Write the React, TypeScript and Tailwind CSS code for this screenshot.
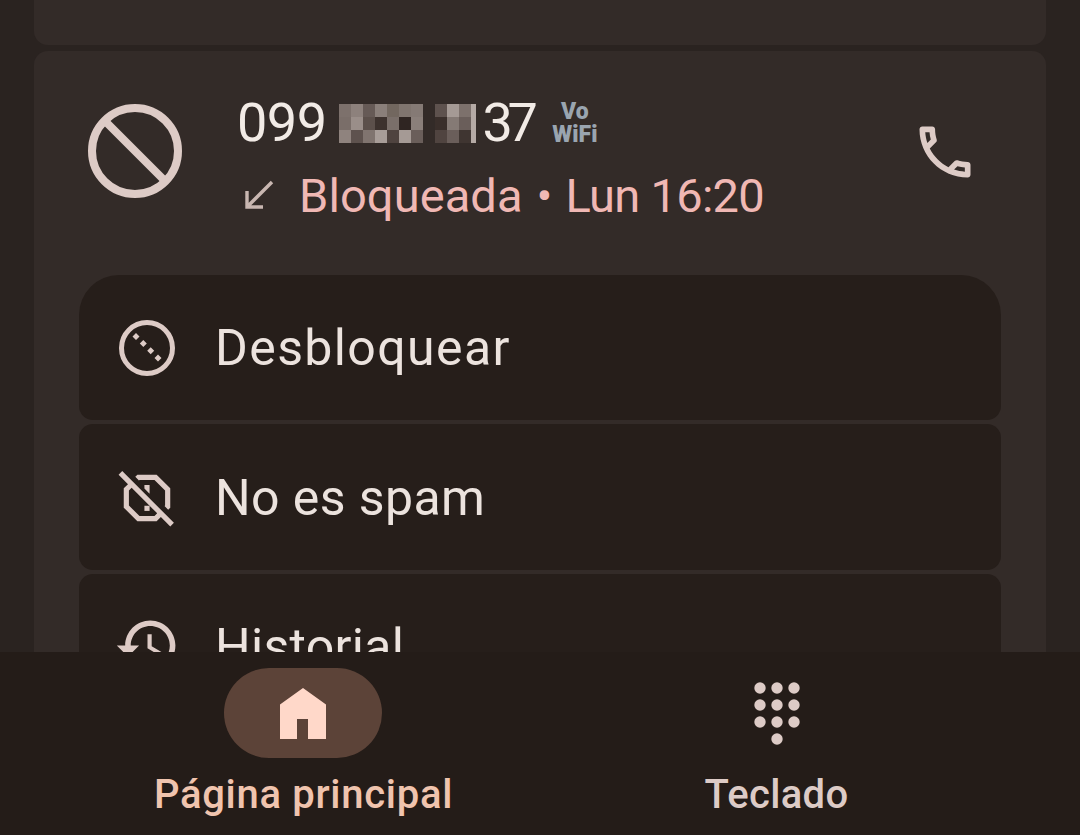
import React from 'react';

const mosaicA = [
  'bg-[#7d716c]', 'bg-[#8d817c]', 'bg-[#665a56]', 'bg-[#8a7f7a]', 'bg-[#72675f]', 'bg-[#80756f]', 'bg-[#857a75]',
  'bg-[#7a6e69]', 'bg-[#9a8e89]', 'bg-[#5c504b]', 'bg-[#3d322e]', 'bg-[#7a6f6a]', 'bg-[#2f2522]', 'bg-[#8a7f7a]',
  'bg-[#8f837e]', 'bg-[#5e524e]', 'bg-[#80746f]', 'bg-[#a89d98]', 'bg-[#4f433f]', 'bg-[#a59a95]', 'bg-[#6a5e5a]',
];

const mosaicB = [
  'bg-[#5e524e]', 'bg-[#a59a95]', 'bg-[#7d716c]',
  'bg-[#3a2f2b]', 'bg-[#857a75]', 'bg-[#6a5e5a]',
  'bg-[#504440]', 'bg-[#6a5e5a]', 'bg-[#3f3531]',
];

const font = "font-['Roboto',sans-serif]";

function BlockIcon() {
  return (
    <svg width="94" height="94" viewBox="0 0 94 94" fill="none" stroke="#ddcbc6" strokeWidth="8">
      <circle cx="47" cy="47" r="43" />
      <path d="M17 17l60 60" />
    </svg>
  );
}

function UnblockIcon() {
  return (
    <svg width="56" height="56" viewBox="0 0 56 56" fill="#ddcbc6">
      <circle cx="28" cy="28" r="25.5" fill="none" stroke="#ddcbc6" strokeWidth="5" />
      <path d="M17 13l3.5 3.5-3.5 3.5-3.5-3.5zM24.3 20l3.5 3.5-3.5 3.5-3.5-3.5zM31.7 27.3l3.5 3.5-3.5 3.5-3.5-3.5zM39 34.6l3.5 3.5-3.5 3.5-3.5-3.5z" />
    </svg>
  );
}

function NotSpamIcon() {
  return (
    <svg width="62" height="62" viewBox="0 0 24 24" fill="#ddcbc6">
      <path d="M9.1 5h5.8L19 9.1v5.8l-.22.22 1.42 1.41.8-.8V8.27L15.73 3H8.27l-.8.8 1.41 1.42zM13 7h-2v1.33l2 2zM2.41 1.58L1 2.99l3.64 3.64L3 8.27v7.46L8.27 21h7.46l1.64-1.64L21.01 23l1.41-1.41L2.41 1.58zM14.9 19H9.1L5 14.9V9.1l1.05-1.05 9.9 9.9L14.9 19z" />
      <path d="M11 15h2v2h-2z" />
    </svg>
  );
}

function HistoryIcon() {
  return (
    <svg width="67" height="67" viewBox="0 0 24 24" fill="#ddcbc6" className="mb-[3px]">
      <path d="M13 3c-4.97 0-9 4.03-9 9H1l3.89 3.89.07.14L9 12H6c0-3.87 3.13-7 7-7s7 3.13 7 7-3.13 7-7 7c-1.93 0-3.68-.79-4.94-2.06l-1.42 1.42C8.27 19.99 10.51 21 13 21c4.97 0 9-4.03 9-9s-4.03-9-9-9zm-1 5v5l4.28 2.54.72-1.21-3.5-2.08V8H12z" />
    </svg>
  );
}

function PhoneIcon() {
  return (
    <svg width="68" height="68" viewBox="0 0 24 24" fill="#ddcbc6">
      <path d="M6.54 5c.06.89.21 1.76.45 2.59l-1.2 1.2c-.41-1.2-.67-2.47-.76-3.79h1.51m9.86 12.02c.85.24 1.72.39 2.6.45v1.49c-1.32-.09-2.59-.35-3.8-.75l1.2-1.19M7.5 3H4c-.55 0-1 .45-1 1 0 9.39 7.61 17 17 17 .55 0 1-.45 1-1v-3.49c0-.55-.45-1-1-1-1.24 0-2.45-.2-3.57-.57-.1-.04-.21-.05-.31-.05-.26 0-.51.1-.71.29l-2.2 2.2c-2.83-1.45-5.15-3.76-6.59-6.59l2.2-2.2c.28-.28.36-.67.25-1.02C8.7 6.45 8.5 5.25 8.5 4c0-.55-.45-1-1-1z" />
    </svg>
  );
}

function BlockedArrow() {
  return (
    <svg width="30" height="30" viewBox="0 0 30 30" fill="none" stroke="#c9b7b1" strokeWidth="3.4">
      <path d="M28 2L3 27M3 11v16h16" />
    </svg>
  );
}

function HomeIcon() {
  return (
    <svg width="46" height="51" viewBox="0 0 46 51" fill="#ffd8c9">
      <path d="M23 0L46 16.500V51H28V31H17V51H0V16.500z" />
    </svg>
  );
}

function DialpadIcon() {
  const xs = [6, 23, 40];
  const ys = [6, 23, 40];
  return (
    <svg width="46" height="63" viewBox="0 0 46 63" fill="#ddcbc6">
      {ys.map((y) => xs.map((x) => <circle key={`${x}-${y}`} cx={x} cy={y} r="5.700" />))}
      <circle cx="23" cy="57" r="5.700" />
    </svg>
  );
}

function ActionRow({ icon, label, className }: { icon: React.ReactNode; label: string; className: string }) {
  return (
    <div className={`shrink-0 bg-[#261e1a] flex items-center ${className}`}>
      <div className="w-[136px] flex items-center justify-center shrink-0">{icon}</div>
      <span className="text-[50px] leading-none text-[#ece3de]">{label}</span>
    </div>
  );
}

export default function App() {
  return (
    <div className={`h-[835px] w-[1080px] bg-[#2a2320] flex flex-col overflow-hidden ${font}`}>
      <main className="flex-1 min-h-0 overflow-hidden px-[34px]">
        <div className="h-[45px] bg-[#332b28] rounded-b-[14px]" />

        <div className="mt-[6px] bg-[#332b28] rounded-t-[14px] px-[45px] pb-10">
          <div className="h-[224px] flex items-start">
            <div className="pl-[9px] pt-[53px] shrink-0">
              <BlockIcon />
            </div>
            <div className="ml-[55px] pt-[42px] flex-1 min-w-0">
              <div className="flex items-center h-[60px] text-[54px] leading-none text-[#f2ebe6]">
                <span className="tracking-[-0.5px]">099</span>
                <div className="ml-[12px] grid grid-cols-7 w-[84px] h-[39px]">
                  {mosaicA.map((c, i) => (
                    <div key={i} className={c} />
                  ))}
                </div>
                <div className="ml-[12px] grid grid-cols-3 w-[36px] h-[39px]">
                  {mosaicB.map((c, i) => (
                    <div key={i} className={c} />
                  ))}
                </div>
                <div className="w-[5px] h-[39px] bg-[#b5aaa5]" />
                <span className="ml-[7px] tracking-[-5.5px]">37</span>
                <div className="ml-[20px] flex flex-col items-center text-[#9aa5b0] font-black text-[23px] leading-[23px]">
                  <span>Vo</span>
                  <span>WiFi</span>
                </div>
              </div>
              <div className="mt-[12px] flex items-center h-[60px]">
                <div className="ml-[7px] w-[55px] shrink-0 flex">
                  <BlockedArrow />
                </div>
                <div className="flex items-center text-[47px] leading-none text-[#f0b8b4] whitespace-nowrap">
                  <span className="tracking-[0.1px]">Bloqueada</span>
                  <span className="ml-[14px]">•</span>
                  <span className="ml-[13px] tracking-[-0.7px]">Lun 16:20</span>
                </div>
              </div>
            </div>
            <div className="pt-[67px] mr-[22px] shrink-0">
              <PhoneIcon />
            </div>
          </div>

          <div className="flex flex-col gap-[4px]">
            <ActionRow
              icon={<UnblockIcon />}
              label="Desbloquear"
              className="h-[145px] rounded-t-[40px] rounded-b-[14px] tracking-[1.4px]"
            />
            <ActionRow
              icon={<NotSpamIcon />}
              label="No es spam"
              className="h-[146px] pt-[2px] rounded-[14px] tracking-[0.4px]"
            />
            <ActionRow icon={<HistoryIcon />} label="Historial" className="h-[146px] rounded-[14px] tracking-[0.3px]" />
          </div>
        </div>
      </main>

      <nav className="h-[183px] shrink-0 bg-[#241c18] grid grid-cols-2 px-[67px]">
        <div className="flex flex-col items-center pt-[16px]">
          <div className="w-[158px] h-[90px] mr-[2px] rounded-full bg-[#5c4338] flex items-center justify-center">
            <HomeIcon />
          </div>
          <span className="mt-[12px] text-[40px] leading-[50px] font-medium tracking-[0.7px] text-[#f0c4ae]">
            Página principal
          </span>
        </div>
        <div className="flex flex-col items-center pt-[16px]">
          <div className="h-[90px] flex items-center justify-center">
            <DialpadIcon />
          </div>
          <span className="mt-[12px] text-[40px] leading-[50px] font-medium tracking-[0.3px] text-[#ddcbc6]">
            Teclado
          </span>
        </div>
      </nav>
    </div>
  );
}
